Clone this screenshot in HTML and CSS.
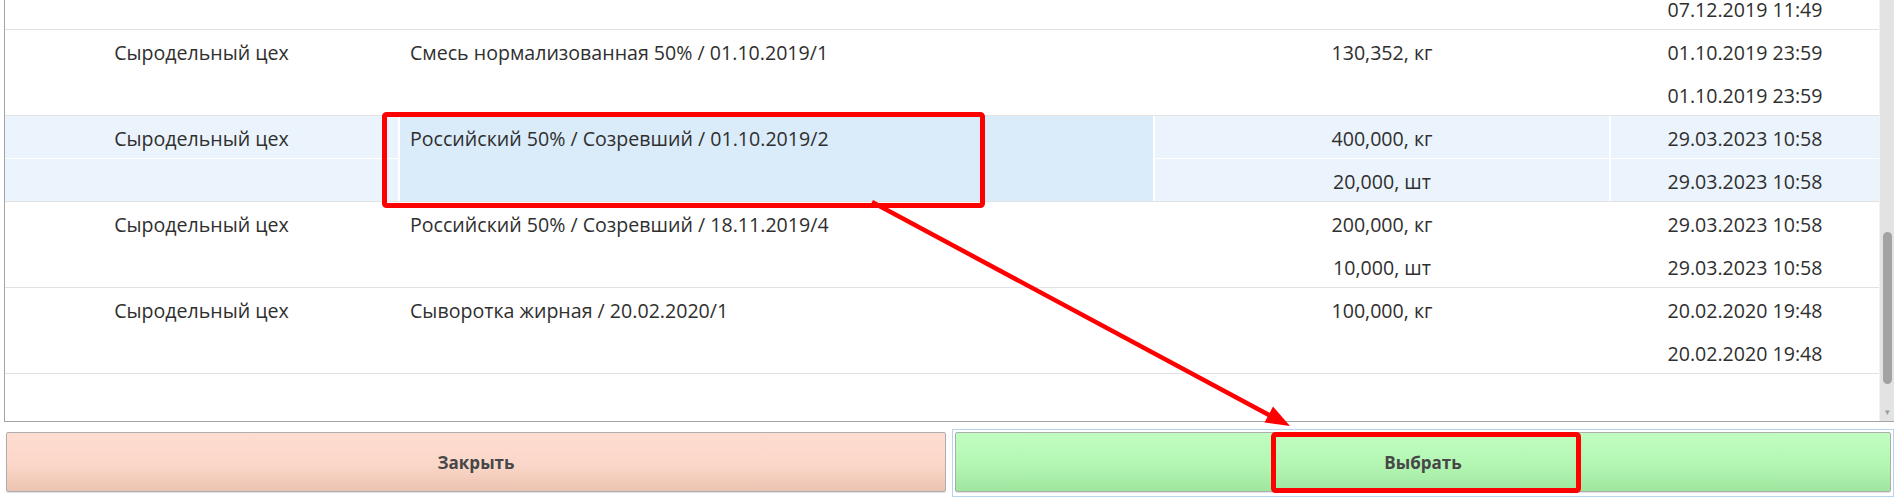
FILE: index.html
```html
<!DOCTYPE html>
<html lang="ru">
<head>
<meta charset="utf-8">
<title>Выбор партии</title>
<link rel="stylesheet" href="styles.css">
</head>
<body>
<div class="page">
  <div class="grid-frame">
    <div class="grid-body">
      <div class="rows">
        <div class="row">
          <div class="cell col-a"></div>
          <div class="cell col-b"></div>
          <div class="cell col-c"></div>
          <div class="cell col-d"></div>
          <div class="cell col-a"></div>
          <div class="cell col-c"></div>
          <div class="cell col-d">07.12.2019 11:49</div>
        </div>
        <div class="row">
          <div class="cell col-a">Сыродельный цех</div>
          <div class="cell col-b">Смесь нормализованная 50% / 01.10.2019/1</div>
          <div class="cell col-c">130,352, кг</div>
          <div class="cell col-d">01.10.2019 23:59</div>
          <div class="cell col-a"></div>
          <div class="cell col-c"></div>
          <div class="cell col-d">01.10.2019 23:59</div>
        </div>
        <div class="row row-hover">
          <div class="cell col-a">Сыродельный цех</div>
          <div class="cell col-b cell-selected">Российский 50% / Созревший / 01.10.2019/2</div>
          <div class="cell col-c">400,000, кг</div>
          <div class="cell col-d">29.03.2023 10:58</div>
          <div class="cell col-a"></div>
          <div class="cell col-c">20,000, шт</div>
          <div class="cell col-d">29.03.2023 10:58</div>
        </div>
        <div class="row">
          <div class="cell col-a">Сыродельный цех</div>
          <div class="cell col-b">Российский 50% / Созревший / 18.11.2019/4</div>
          <div class="cell col-c">200,000, кг</div>
          <div class="cell col-d">29.03.2023 10:58</div>
          <div class="cell col-a"></div>
          <div class="cell col-c">10,000, шт</div>
          <div class="cell col-d">29.03.2023 10:58</div>
        </div>
        <div class="row">
          <div class="cell col-a">Сыродельный цех</div>
          <div class="cell col-b">Сыворотка жирная / 20.02.2020/1</div>
          <div class="cell col-c">100,000, кг</div>
          <div class="cell col-d">20.02.2020 19:48</div>
          <div class="cell col-a"></div>
          <div class="cell col-c"></div>
          <div class="cell col-d">20.02.2020 19:48</div>
        </div>
      </div>
    </div>
    <div class="scrollbar">
      <div class="scroll-space"></div>
      <div class="scroll-thumb"></div>
      <div class="scroll-rest"></div>
      <div class="scroll-arrow">&#9662;</div>
    </div>
  </div>

  <div class="actions">
    <button class="btn btn-close" type="button">Закрыть</button>
    <div class="focus-frame">
      <button class="btn btn-select" type="button">Выбрать</button>
    </div>
  </div>

  <svg class="annotations" width="1894" height="503" viewBox="0 0 1894 503" xmlns="http://www.w3.org/2000/svg">
    <rect x="384.5" y="114.5" width="598" height="91" rx="2" fill="none" stroke="#ff0000" stroke-width="5"/>
    <rect x="1273.5" y="434.5" width="305" height="56" rx="2" fill="none" stroke="#ff0000" stroke-width="5"/>
    <line x1="872" y1="202" x2="1269" y2="415" stroke="#ff0000" stroke-width="4.5"/>
    <polygon points="1290,426 1264.5,422.5 1273,406.5" fill="#ff0000"/>
  </svg>
</div>
</body>
</html>
```

FILE: styles.css
```css
html, body {
  margin: 0;
  padding: 0;
  background: #ffffff;
}

body {
  font-family: "Open Sans", "Noto Sans", sans-serif;
  color: #2f2f2f;
  overflow: hidden;
}

.page {
  position: relative;
  width: 1894px;
  height: 503px;
}

.grid-frame {
  display: flex;
  margin-left: 4px;
  height: 421px;
  border-left: 1px solid #a3a3a3;
  border-bottom: 1px solid #a3a3a3;
}

.grid-body {
  flex: 1;
  overflow: hidden;
  background: #ffffff;
}

.rows {
  margin-top: -56px;
}

.row {
  display: grid;
  grid-template-columns: 393px 753px 454px 1fr;
  grid-template-rows: 42px 42px;
  column-gap: 2px;
  row-gap: 1px;
  background: #ffffff;
  border-bottom: 1px solid #e2e2e2;
  font-size: 19.6px;
}

.cell {
  display: flex;
  align-items: center;
  white-space: nowrap;
  background: #ffffff;
  padding-top: 2px;
  box-sizing: border-box;
}

.col-a,
.col-c,
.col-d {
  justify-content: center;
}

.col-b {
  grid-row: span 2;
  align-items: flex-start;
  padding-left: 10px;
  line-height: 42px;
}

.row-hover .cell {
  background: #ebf4fc;
}

.row-hover .cell-selected {
  background: #daebfa;
}

.scrollbar {
  width: 14px;
  display: flex;
  flex-direction: column;
  align-items: center;
  background: #e3e3e3;
  border-left: 1px solid #f2f2f2;
}

.scroll-space {
  height: 232px;
}

.scroll-thumb {
  width: 9px;
  height: 152px;
  border-radius: 5px;
  background: #a3a3a3;
}

.scroll-rest {
  flex: 1;
}

.scroll-arrow {
  font-size: 9px;
  line-height: 12px;
  color: #9a9a9a;
  margin-bottom: 3px;
}

.actions {
  display: flex;
  align-items: flex-start;
  margin-top: 7px;
}

.btn {
  font-family: "Open Sans", "Noto Sans", sans-serif;
  font-weight: 700;
  font-size: 17px;
  color: #474747;
  border: 1px solid #adadad;
  border-radius: 2px;
  height: 60px;
  padding: 0;
  cursor: pointer;
}

.btn-close {
  margin-left: 6px;
  margin-top: 3px;
  width: 940px;
  background: linear-gradient(to bottom, #fedcd0 0%, #fbd7c9 55%, #ecc3b1 100%);
  box-shadow: 0 1px 1px rgba(0, 0, 0, 0.12);
}

.focus-frame {
  flex: 1;
  margin-left: 6px;
  padding: 2px;
  border: 1px solid #b7d4ee;
  height: 62px;
}

.btn-select {
  width: 100%;
  background: linear-gradient(to bottom, #c1fdc1 0%, #b3f6b3 55%, #9fe69f 100%);
  box-shadow: 0 1px 1px rgba(0, 0, 0, 0.12);
}

.annotations {
  position: absolute;
  left: 0;
  top: 0;
  pointer-events: none;
}
```
